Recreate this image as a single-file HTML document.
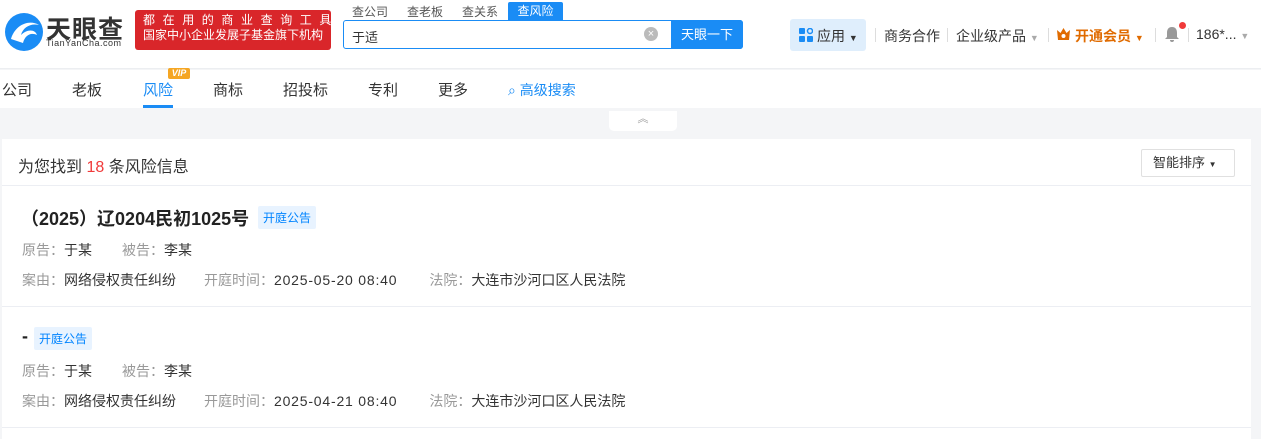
<!DOCTYPE html>
<html><head><meta charset="utf-8"><style>
*{margin:0;padding:0;box-sizing:border-box}
body{width:1261px;height:430px;overflow:hidden;background:#f4f5f7;font-family:"Liberation Sans","Noto Sans CJK SC",sans-serif;color:#333;position:relative}
.a{position:absolute;white-space:nowrap}
.hdr{position:absolute;left:0;top:0;width:1261px;height:69px;background:#fff;border-bottom:1px solid #eceef1}
.nav{position:absolute;left:0;top:70px;width:1261px;height:38px;background:#fff}
.nav span{position:absolute;top:9px;font-size:15px;color:#333}
.card{position:absolute;left:2px;top:139px;width:1249px;height:300px;background:#fff}
.lbl{color:#999;font-size:14px}
.v{color:#333;font-size:14px}
.d{letter-spacing:.8px}
.m{margin-left:30px}
.tag{position:absolute;background:#e8f3ff;color:#0084ff;font-size:12px;padding:3px 5px;border-radius:2px}
</style></head><body>
<div class="hdr">
  <svg class="a" style="left:3px;top:11px" width="42" height="42" viewBox="0 0 42 42"><circle cx="21" cy="21" r="19" fill="#1a8cf5"/><path d="M8 28c4-14 18-20 28-14-8-2-16 2-18 10 6-6 14-6 16 0-6-3-12 0-14 8z" fill="#fff"/></svg>
  <div class="a" style="left:46px;top:10px;font-size:25px;font-weight:bold;color:#333;letter-spacing:1px">天眼查</div>
  <div class="a" style="left:46px;top:38px;font-size:9px;color:#333;letter-spacing:.5px">TianYanCha.com</div>
  <div class="a" style="left:135px;top:10px;width:196px;height:40px;background:#d9262a;border-radius:3px;color:#fff;font-size:12px;line-height:15px;padding:3px 0 0 8px"><div style="letter-spacing:7.6px">都在用的商业查询工具</div><div>国家中小企业发展子基金旗下机构</div></div>
  <div class="a" style="left:352px;top:3px;font-size:12px;color:#555">查公司</div>
  <div class="a" style="left:407px;top:3px;font-size:12px;color:#555">查老板</div>
  <div class="a" style="left:462px;top:3px;font-size:12px;color:#555">查关系</div>
  <div class="a" style="left:508px;top:2px;width:55px;height:18px;background:#1a8cf5;color:#fff;font-size:12px;text-align:center;line-height:18px;border-radius:2px 2px 0 0">查风险</div>
  <div class="a" style="left:343px;top:20px;width:400px;height:29px;border:1px solid #1a8cf5;border-radius:3px;background:#fff"></div>
  <div class="a" style="left:352px;top:27px;font-size:13px;color:#333">于适</div>
  <div class="a" style="left:644px;top:27px;width:14px;height:14px;border-radius:50%;background:#bbb;color:#fff;font-size:11px;line-height:14px;text-align:center">×</div>
  <div class="a" style="left:671px;top:20px;width:72px;height:29px;background:#1a8cf5;color:#fff;font-size:13px;line-height:29px;text-align:center;border-radius:0 3px 3px 0">天眼一下</div>
  <div class="a" style="left:790px;top:19px;width:76px;height:32px;background:#dfeefc;border-radius:3px"></div>
  <svg class="a" style="left:799px;top:28px" width="14" height="14"><rect x="0" y="0" width="6" height="6" rx="1" fill="#1a8cf5"/><circle cx="11" cy="3" r="2.5" fill="none" stroke="#1a8cf5" stroke-width="1.5"/><rect x="0" y="8" width="6" height="6" rx="1" fill="#1a8cf5"/><rect x="8" y="8" width="6" height="6" rx="1" fill="#1a8cf5"/></svg>
  <div class="a" style="left:817px;top:26px;font-size:14px;color:#333">应用 <span style="font-size:9px">▼</span></div>
  <div class="a" style="left:875px;top:28px;width:1px;height:14px;background:#ddd"></div>
  <div class="a" style="left:884px;top:26px;font-size:14px;color:#333">商务合作</div>
  <div class="a" style="left:947px;top:28px;width:1px;height:14px;background:#ddd"></div>
  <div class="a" style="left:956px;top:26px;font-size:14px;color:#333">企业级产品 <span style="font-size:9px;color:#aaa">▼</span></div>
  <div class="a" style="left:1048px;top:28px;width:1px;height:14px;background:#ddd"></div>
  <svg class="a" style="left:1057px;top:28px" width="13" height="12"><path d="M0 2l3.5 3L6.5 0l3 5L13 2l-1 10H1z" fill="#e06b00"/><circle cx="6.5" cy="8" r="2" fill="#fff"/></svg>
  <div class="a" style="left:1075px;top:26px;font-size:14px;color:#e06b00;font-weight:bold">开通会员 <span style="font-size:9px">▼</span></div>
  <div class="a" style="left:1155px;top:28px;width:1px;height:14px;background:#ddd"></div>
  <svg class="a" style="left:1164px;top:26px" width="16" height="17"><path d="M8 1c-4 0-5 3-5 6v4l-2 2h14l-2-2V7c0-3-1-6-5-6zM6 14h4a2 2 0 0 1-4 0z" fill="#999"/></svg>
  <div class="a" style="left:1179px;top:22px;width:7px;height:7px;border-radius:50%;background:#f03a3a"></div>
  <div class="a" style="left:1188px;top:28px;width:1px;height:14px;background:#ddd"></div>
  <div class="a" style="left:1196px;top:26px;font-size:14px;color:#333">186*... <span style="font-size:9px;color:#aaa">▼</span></div>
</div>
<div class="nav">
  <span style="left:2px">公司</span><span style="left:72px">老板</span>
  <span style="left:143px;color:#1a8cf5">风险</span>
  <div class="a" style="left:168px;top:-2px;width:22px;height:11px;background:#f5a623;color:#fff;font-size:9px;font-weight:bold;font-style:italic;line-height:11px;text-align:center;border-radius:2px">VIP</div>
  <div class="a" style="left:143px;top:35px;width:30px;height:3px;background:#1a8cf5"></div>
  <span style="left:213px">商标</span><span style="left:283px">招投标</span><span style="left:368px">专利</span><span style="left:438px">更多</span>
  <span style="left:508px;color:#1a8cf5;font-size:14px;top:10px">⌕ 高级搜索</span>
</div>
<div class="a" style="left:609px;top:111px;width:68px;height:20px;background:#fff;border-radius:0 0 5px 5px;color:#999;font-size:11px;text-align:center;line-height:16px">︽</div>
<div class="card">
  <div class="a" style="left:16px;top:14px;font-size:16px;color:#333">为您找到 <span style="color:#f03a3a">18</span> 条风险信息</div>
  <div class="a" style="left:1139px;top:10px;width:94px;height:28px;border:1px solid #e0e0e0;border-radius:2px;font-size:13px;line-height:26px;padding-left:11px;color:#333">智能排序 <span style="font-size:8px">▼</span></div>
  <div class="a" style="left:0;top:46px;width:1249px;height:1px;background:#eceef3"></div>
  <div class="a" style="left:19px;top:66px;font-size:18px;font-weight:bold;color:#222">（2025）辽0204民初1025号</div>
  <div class="tag" style="left:256px;top:67px">开庭公告</div>
  <div class="a" style="left:20px;top:101px"><span class="lbl">原告：</span><span class="v">于某</span><span class="lbl m">被告：</span><span class="v">李某</span></div>
  <div class="a" style="left:20px;top:131px"><span class="lbl">案由：</span><span class="v">网络侵权责任纠纷</span><span class="lbl m" style="margin-left:28px">开庭时间：</span><span class="v d">2025-05-20 08:40</span><span class="lbl m" style="margin-left:32px">法院：</span><span class="v">大连市沙河口区人民法院</span></div>
  <div class="a" style="left:0;top:167px;width:1249px;height:1px;background:#eceef3"></div>
  <div class="a" style="left:20px;top:187px;font-size:18px;font-weight:bold;color:#222">-</div>
  <div class="tag" style="left:32px;top:188px">开庭公告</div>
  <div class="a" style="left:20px;top:222px"><span class="lbl">原告：</span><span class="v">于某</span><span class="lbl m">被告：</span><span class="v">李某</span></div>
  <div class="a" style="left:20px;top:252px"><span class="lbl">案由：</span><span class="v">网络侵权责任纠纷</span><span class="lbl m" style="margin-left:28px">开庭时间：</span><span class="v d">2025-04-21 08:40</span><span class="lbl m" style="margin-left:32px">法院：</span><span class="v">大连市沙河口区人民法院</span></div>
  <div class="a" style="left:0;top:288px;width:1249px;height:1px;background:#eceef3"></div>
</div>
</body></html>
